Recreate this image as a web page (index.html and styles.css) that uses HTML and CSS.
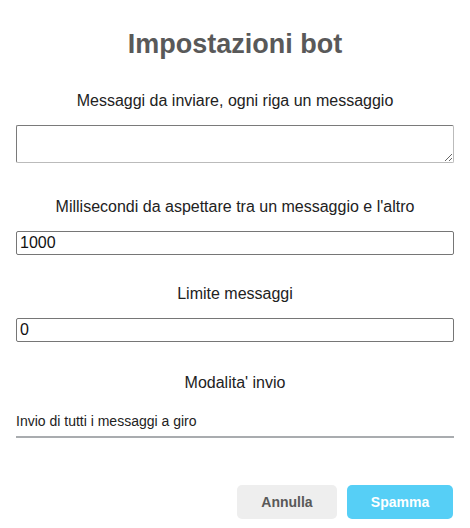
FILE: index.html
```html
<!DOCTYPE html>
<html lang="it">
<head>
<meta charset="utf-8">
<title>Impostazioni bot</title>
<link rel="stylesheet" href="styles.css">
</head>
<body>
<div class="dialog">
  <h2 class="title">Impostazioni bot</h2>
  <label class="label label-first" for="msgs">Messaggi da inviare, ogni riga un messaggio</label>
  <textarea id="msgs" class="textarea"></textarea>
  <label class="label label-second" for="ms">Millisecondi da aspettare tra un messaggio e l'altro</label>
  <input id="ms" class="input" type="text" value="1000">
  <label class="label label-next" for="lim">Limite messaggi</label>
  <input id="lim" class="input" type="text" value="0">
  <label class="label label-last" for="mode">Modalita' invio</label>
  <div id="mode" class="select">Invio di tutti i messaggi a giro</div>
  <div class="actions">
    <button class="btn btn-cancel">Annulla</button>
    <button class="btn btn-confirm">Spamma</button>
  </div>
</div>
</body>
</html>
```
FILE: styles.css
```css
html, body {
  margin: 0;
  padding: 0;
  background: #ffffff;
}
body {
  font-family: "Liberation Sans", Arial, sans-serif;
  color: #222222;
}
.dialog {
  width: 470px;
  height: 528px;
  box-sizing: border-box;
  padding: 28px 16px 0 16px;
  display: flex;
  flex-direction: column;
}
.title {
  margin: 0;
  font-size: 27px;
  line-height: 32px;
  font-weight: 700;
  color: #595959;
  text-align: center;
}
.label {
  display: block;
  font-size: 16px;
  line-height: 18px;
  text-align: center;
  color: #222222;
  margin-bottom: 15px;
}
.label-first { margin-top: 32px; }
.label-second { margin-top: 35px; }
.label-next { margin-top: 30px; }
.label-last { margin-top: 32px; }
.textarea {
  box-sizing: border-box;
  width: 438px;
  height: 38px;
  margin: 0;
  border: 1px solid #767676;
  border-color: #7a7a7a #bbbbbb #bbbbbb #7a7a7a;
  border-radius: 2px;
  font-family: "Liberation Sans", Arial, sans-serif;
  font-size: 16px;
  resize: vertical;
}
.input {
  box-sizing: border-box;
  width: 438px;
  height: 24px;
  margin: 0;
  padding: 1px 3px;
  border: 1px solid #767676;
  border-radius: 2px;
  font-family: "Liberation Sans", Arial, sans-serif;
  font-size: 16px;
  color: #111111;
}
.select {
  box-sizing: border-box;
  width: 438px;
  height: 31px;
  padding-top: 6px;
  font-size: 14px;
  line-height: 17px;
  color: #222222;
  border-bottom: 2px solid #a9acaf;
}
.actions {
  margin-top: 47px;
  display: flex;
  justify-content: flex-end;
  gap: 10px;
  padding-right: 1px;
}
.btn {
  height: 34px;
  border: none;
  border-radius: 5px;
  font-family: "Liberation Sans", Arial, sans-serif;
  font-size: 14px;
  font-weight: 700;
  padding: 0;
  cursor: pointer;
}
.btn-cancel {
  width: 100px;
  background: #eeeeee;
  color: #595959;
}
.btn-confirm {
  width: 106px;
  background: #56cff6;
  color: #ffffff;
}
```
